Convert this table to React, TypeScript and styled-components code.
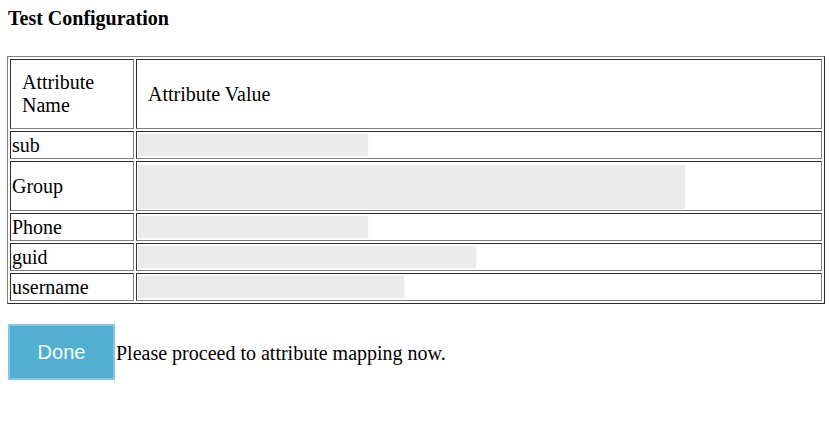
import React from "react";
import styled, { createGlobalStyle } from "styled-components";

const GlobalStyle = createGlobalStyle`
  html, body {
    margin: 0;
    padding: 0;
    background: #ffffff;
  }
  body {
    font-family: "Liberation Serif", "Times New Roman", serif;
    color: #000000;
  }
`;

const Page = styled.div`
  padding: 7px 4px 0 7px;
`;

const Title = styled.div`
  margin-left: 1px;
  font-size: 20px;
  font-weight: bold;
  line-height: 23px;
`;

const Table = styled.table`
  margin-top: 26px;
  width: 100%;
  border: 1px outset #808080;
  border-spacing: 2px;
  font-size: 20px;
  line-height: 23px;
`;

const HeadCell = styled.td<{ $first?: boolean }>`
  border: 1px inset #808080;
  padding: 11px 10px 11px 11px;
  vertical-align: middle;
  text-align: left;
  ${(p) => (p.$first ? "width: 101px;" : "")}
`;

const Cell = styled.td`
  border: 1px inset #808080;
  padding: 1px;
  vertical-align: middle;
`;

const Redacted = styled.div<{ $tall?: boolean }>`
  height: ${(p) => (p.$tall ? "44px" : "22px")};
  margin: ${(p) => (p.$tall ? "2px 0 0" : "1px 0")};
  background: #ebebeb;
  box-shadow: 0 0 2px #f1f1f1;
`;

const Footer = styled.div`
  margin: 20px 0 0 1px;
  display: flex;
  align-items: center;
`;

const DoneButton = styled.button`
  box-sizing: border-box;
  width: 107px;
  height: 56px;
  background: #53afd1;
  border: 2px solid #82c8e4;
  color: #f4fbfe;
  font-family: "Liberation Sans", Arial, sans-serif;
  font-size: 20px;
  padding: 0;
  margin: 0 1px 0 0;
  cursor: pointer;
`;

const Note = styled.span`
  font-size: 20px;
  line-height: 23px;
  padding-top: 2px;
`;

const rows: { name: string; width: number; tall?: boolean }[] = [
  { name: "sub", width: 230 },
  { name: "Group", width: 547, tall: true },
  { name: "Phone", width: 230 },
  { name: "guid", width: 338 },
  { name: "username", width: 266 },
];

export default function App() {
  return (
    <>
      <GlobalStyle />
      <Page>
        <Title>Test Configuration</Title>
        <Table>
          <tbody>
            <tr>
              <HeadCell $first>Attribute Name</HeadCell>
              <HeadCell>Attribute Value</HeadCell>
            </tr>
            {rows.map((r) => (
              <tr key={r.name}>
                <Cell>{r.name}</Cell>
                <Cell>
                  <Redacted $tall={r.tall} style={{ width: r.width }} />
                </Cell>
              </tr>
            ))}
          </tbody>
        </Table>
        <Footer>
          <DoneButton>Done</DoneButton>
          <Note>Please proceed to attribute mapping now.</Note>
        </Footer>
      </Page>
    </>
  );
}
